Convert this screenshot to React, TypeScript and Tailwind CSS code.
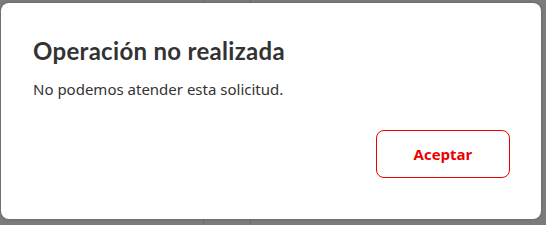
import React from "react";

export default function App() {
  return (
    <div className="relative w-[546px] h-[225px] overflow-hidden bg-[#7b7b7b]" style={{ fontFamily: "'Open Sans', sans-serif" }}>
      <div className="flex h-full">
        <div className="w-[204px] h-full border-r border-[#6c6c6c]" />
        <div className="w-[47px] h-full border-r border-[#6c6c6c]" />
        <div className="flex-1" />
      </div>
      <div className="absolute left-[1px] top-[3px] w-[540px] h-[216px] bg-white rounded-[8px] shadow-[0_0_3px_rgba(0,0,0,0.25)] flex flex-col pl-[32px] pr-[31px] pt-[34px] pb-[41px]">
        <h1 className="text-[24px] leading-[28px] font-bold text-[#333333] tracking-[0.3px]" style={{ fontFamily: "Lato, sans-serif" }}>
          Operación no realizada
        </h1>
        <p className="mt-[14px] text-[15px] leading-[20px] text-[#333333]" style={{ fontFamily: "'Noto Sans', sans-serif" }}>
          No podemos atender esta solicitud.
        </p>
        <div className="mt-auto flex justify-end">
          <button className="w-[134px] h-[48px] rounded-[8px] border border-[#ec0000] text-[#ec0000] text-[15px] font-bold" style={{ fontFamily: "'Open Sans', sans-serif" }}>
            Aceptar
          </button>
        </div>
      </div>
    </div>
  );
}
